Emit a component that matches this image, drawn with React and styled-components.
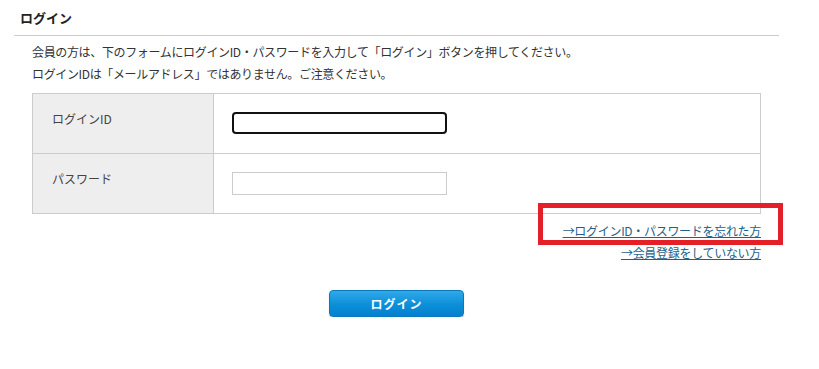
import styled, { createGlobalStyle } from 'styled-components'

const GlobalStyle = createGlobalStyle`
  body {
    margin: 0;
    background: #fff;
    font-family: "Noto Sans CJK JP", "Noto Sans", sans-serif;
    color: #333;
  }
`

const Page = styled.div`
  width: 765px;
  padding-left: 14px;
`

const Heading = styled.h2`
  margin: 0;
  padding: 8px 6px 0;
  height: 36px;
  box-sizing: border-box;
  font-size: 13px;
  line-height: 19px;
  font-weight: 700;
  color: #222;
  border-bottom: 1px solid #ccc;
`

const Body = styled.div`
  width: 729px;
  padding: 0 18px;
`

const Intro = styled.p`
  margin: 5px 0 8px;
  font-size: 12px;
  line-height: 22px;
  letter-spacing: -0.35px;
  color: #333;
`

const Table = styled.div`
  border: 1px solid #ccc;
  display: grid;
  grid-template-columns: 181px 1fr;
`

const Label = styled.div`
  background: #eee;
  border-right: 1px solid #ccc;
  border-top: ${p => (p.$first ? 'none' : '1px solid #ccc')};
  height: ${p => (p.$first ? '59px' : '60px')};
  box-sizing: border-box;
  padding: 15px 0 0 19px;
  font-size: 12px;
  line-height: 20px;
  color: #444;
`

const Cell = styled.div`
  border-top: ${p => (p.$first ? 'none' : '1px solid #ccc')};
  height: ${p => (p.$first ? '59px' : '60px')};
  box-sizing: border-box;
  padding: 18px 0 0 18px;
`

const Input = styled.input`
  display: block;
  width: 215px;
  height: ${p => (p.$focused ? '22px' : '23px')};
  box-sizing: border-box;
  margin: 0;
  padding: 0 4px;
  font-size: 12px;
  background: #fff;
  border: ${p => (p.$focused ? '2px solid #111' : '1px solid #ccc')};
  border-radius: ${p => (p.$focused ? '4px' : '0')};
  outline: none;
`

const Links = styled.div`
  position: relative;
  margin-top: 6px;
  display: flex;
  flex-direction: column;
  align-items: flex-end;
`

const Link = styled.a`
  font-size: 12px;
  line-height: 22px;
  letter-spacing: -0.3px;
  color: #1f5f8c;
  text-decoration: underline;
  cursor: pointer;
`

const Highlight = styled.div`
  position: absolute;
  left: 506px;
  top: -17px;
  width: 245px;
  height: 42px;
  box-sizing: border-box;
  border: 5px solid #e51f28;
  pointer-events: none;
`

const Actions = styled.div`
  display: flex;
  justify-content: center;
  margin-top: 26px;
`

const Button = styled.button`
  width: 135px;
  height: 27px;
  border: 1px solid #0a78bd;
  border-radius: 4px;
  background: linear-gradient(#2fa9e8, #0b8fd8 55%, #0580cc);
  color: #fff;
  font-family: inherit;
  font-size: 12px;
  font-weight: 700;
  letter-spacing: 1px;
  box-shadow: 0 1px 1px rgba(0, 0, 0, 0.25);
  cursor: pointer;
`

export default function App () {
  return (
    <>
      <GlobalStyle />
      <Page>
        <Heading>ログイン</Heading>
        <Body>
          <Intro>
            会員の方は、下のフォームにログインID・パスワードを入力して「ログイン」ボタンを押してください。<br />
            ログインIDは「メールアドレス」ではありません。ご注意ください。
          </Intro>
          <Table>
            <Label $first>ログインID</Label>
            <Cell $first><Input type='text' $focused /></Cell>
            <Label>パスワード</Label>
            <Cell><Input type='password' /></Cell>
          </Table>
          <Links>
            <Highlight />
            <Link>→ログインID・パスワードを忘れた方</Link>
            <Link>→会員登録をしていない方</Link>
          </Links>
          <Actions>
            <Button>ログイン</Button>
          </Actions>
        </Body>
      </Page>
    </>
  )
}
